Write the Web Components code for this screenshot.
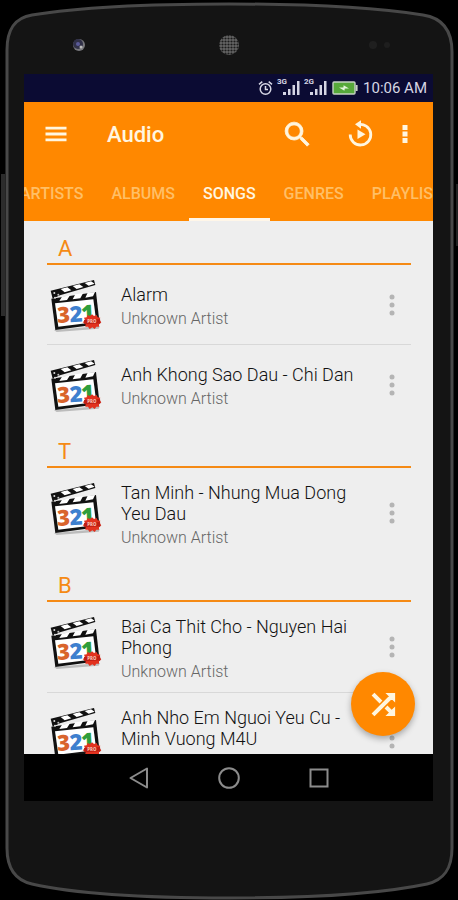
<!DOCTYPE html>
<html lang="en">
<head>
<meta charset="utf-8">
<meta name="viewport" content="width=device-width, initial-scale=1">
<title>Audio</title>
<style>
    body {
        margin: 0;
        background: #000;
        font-family: Roboto, 'Liberation Sans', sans-serif;
    }
</style>
</head>
<body>
<phone-frame>
    <status-bar time="10:06 AM"></status-bar>
    <app-bar>Audio</app-bar>
    <tab-bar tabs="ARTISTS,ALBUMS,SONGS,GENRES,PLAYLISTS" active="SONGS"></tab-bar>
    <song-list>
        <song-section letter="A">
            <song-item artist="Unknown Artist">Alarm</song-item>
            <song-item artist="Unknown Artist">Anh Khong Sao Dau - Chi Dan</song-item>
        </song-section>
        <song-section letter="T">
            <song-item artist="Unknown Artist">Tan Minh - Nhung Mua Dong Yeu Dau</song-item>
        </song-section>
        <song-section letter="B">
            <song-item artist="Unknown Artist">Bai Ca Thit Cho - Nguyen Hai Phong</song-item>
            <song-item artist="Unknown Artist">Anh Nho Em Nguoi Yeu Cu - Minh Vuong M4U</song-item>
        </song-section>
        <shuffle-button slot="action"></shuffle-button>
    </song-list>
    <nav-bar></nav-bar>
</phone-frame>

<script>
class PhoneFrame extends HTMLElement {
    constructor() {
        super();
        this.attachShadow({ mode: 'open' });
    }

    connectedCallback() {
        this.shadowRoot.innerHTML = `
            <style>
                :host {
                    display: flex;
                    flex-direction: column;
                    position: relative;
                    box-sizing: border-box;
                    height: 100vh;
                    padding: 0 25px 99px 24px;
                }
                .body {
                    position: absolute;
                    inset: 0;
                    width: 100%;
                    height: 100%;
                    z-index: -1;
                }
                .bezel {
                    flex: none;
                    display: grid;
                    grid-template-columns: 1fr auto 1fr;
                    align-items: center;
                    height: 74px;
                    padding: 0 40px;
                    box-sizing: border-box;
                }
                .bezel svg { display: block; margin-top: 16px; }
                .camera { margin-left: 8px; }
                .sensors { justify-self: end; }
                .screen {
                    flex: 1;
                    min-height: 0;
                    display: flex;
                    flex-direction: column;
                    overflow: hidden;
                }
            </style>
            <svg class="body" viewBox="0 0 458 900" preserveAspectRatio="none" aria-hidden="true">
                <path d="M3 174 V316" stroke="#2c2c2c" stroke-width="4"/>
                <path d="M457 184 V246" stroke="#222" stroke-width="2"/>
                <path d="M7 50 C7 30 14 18 32 15 C75 8 140 4 229 4 C318 4 378 8 423 15 C443 18 452 31 452 52
                         V848 C452 869 444 880 427 884 C380 894 318 898 229 898 C140 898 76 894 32 884
                         C14 880 7 866 7 848 Z" fill="#141414" stroke="#484848" stroke-width="3"/>
            </svg>
            <div class="bezel">
                <svg class="camera" width="14" height="14" viewBox="0 0 14 14" aria-hidden="true">
                    <circle cx="7" cy="7" r="6" fill="#77777b"/>
                    <circle cx="6" cy="6" r="5" fill="#303047"/>
                    <circle cx="6" cy="6" r="2" fill="#5a5a98"/>
                    <circle cx="9" cy="9" r="1.5" fill="#bbb"/>
                </svg>
                <svg width="22" height="22" viewBox="0 0 22 22" aria-hidden="true">
                    <defs>
                        <pattern id="mesh" width="3" height="3" patternUnits="userSpaceOnUse">
                            <rect width="3" height="3" fill="#666"/>
                            <circle cx="1.5" cy="1.5" r="1.1" fill="#1c1c1c"/>
                        </pattern>
                    </defs>
                    <circle cx="11" cy="11" r="10" fill="url(#mesh)"/>
                </svg>
                <svg class="sensors" width="24" height="10" viewBox="0 0 24 10" aria-hidden="true">
                    <circle cx="4" cy="5" r="4" fill="#1f1f1f"/>
                    <circle cx="18" cy="5" r="3" fill="#1e1e1e"/>
                </svg>
            </div>
            <div class="screen"><slot></slot></div>
        `;
    }
}

class StatusBar extends HTMLElement {
    constructor() {
        super();
        this.attachShadow({ mode: 'open' });
    }

    connectedCallback() {
        this.shadowRoot.innerHTML = `
            <style>
                :host {
                    flex: none;
                    display: flex;
                    justify-content: flex-end;
                    align-items: center;
                    gap: 5px;
                    height: 28px;
                    padding-right: 6px;
                    background: #0b0b33;
                    color: #d6d6e4;
                    font-size: 15px;
                }
                svg { display: block; }
                .signal { position: relative; padding-left: 5px; }
                .signal span {
                    position: absolute;
                    left: -1px;
                    top: -3px;
                    font-size: 8px;
                    line-height: 8px;
                    font-weight: 700;
                }
            </style>
            <svg width="15" height="16" viewBox="0 0 15 16" fill="none" stroke="#d6d6e4" stroke-width="1.5" aria-hidden="true">
                <circle cx="7.5" cy="9" r="5.3"/>
                <path d="M7.5 6 V9.4 H10 M1 4.4 L4.3 1.6 M14 4.4 L10.7 1.6"/>
            </svg>
            ${this.signal('3G')}
            ${this.signal('2G')}
            <svg width="26" height="14" viewBox="0 0 26 14" aria-hidden="true">
                <rect x="1" y="1" width="22" height="12" rx="1" fill="#56a83a" stroke="#c6d2c4" stroke-width="1.4"/>
                <path d="M24.6 4 V10" stroke="#c6d2c4" stroke-width="2"/>
                <path d="M7 6.4 L11.400 6.400 L11.6 4.200 L17 7.6 L12.8 7.6 L12.400 9.800 Z" fill="#e4f4dc"/>
            </svg>
            <time>${this.getAttribute('time')}</time>
        `;
    }

    signal(label) {
        return `
            <div class="signal">
                <span>${label}</span>
                <svg width="17" height="14" viewBox="0 0 17 14" fill="#d6d6e4" aria-hidden="true">
                    <path d="M0 11h3v3H0zM5 8h2.5v6H5zM9.5 4h2.5v10H9.5zM14 0h2.5v14H14z"/>
                </svg>
            </div>
        `;
    }
}

class AppBar extends HTMLElement {
    constructor() {
        super();
        this.attachShadow({ mode: 'open' });
    }

    connectedCallback() {
        this.shadowRoot.innerHTML = `
            <style>
                :host {
                    flex: none;
                    display: flex;
                    align-items: center;
                    height: 64px;
                    padding: 0 8px;
                    background: #ff8800;
                    color: #fff6e0;
                }
                h1 {
                    flex: 1;
                    margin: 0 0 0 27px;
                    font-size: 22px;
                    font-weight: 500;
                }
                button {
                    display: grid;
                    place-items: center;
                    width: 48px;
                    height: 48px;
                    padding: 0;
                    border: 0;
                    background: none;
                    color: inherit;
                }
                .search { margin-right: 16px; }
                .more { width: 40px; }
                svg { display: block; fill: currentColor; }
            </style>
            <button aria-label="Menu">
                <svg width="28" height="28" viewBox="0 0 24 24"><path d="M3 18.200h18v-2.400H3v2.400zm0-5h18v-2.400H3v2.400zm0-7.400v2.400h18V5.800H3z"/></svg>
            </button>
            <h1><slot></slot></h1>
            <button class="search" aria-label="Search">
                <svg width="33" height="33" viewBox="0 0 24 24" stroke="currentColor" stroke-width=".6"><path d="M15.5 14h-.79l-.28-.27A6.471 6.471 0 0 0 16 9.5 6.5 6.5 0 1 0 9.5 16c1.61 0 3.09-.59 4.23-1.57l.27.28v.79l5 4.99L20.49 19l-4.99-5zm-6 0C7.01 14 5 11.99 5 9.5S7.01 5 9.5 5 14 7.01 14 9.5 11.99 14 9.5 14z"/></svg>
            </button>
            <button aria-label="Resume playback">
                <svg width="32" height="32" viewBox="0 0 32 32">
                    <path d="M13 6.700 A10.3 10.3 0 1 1 5.200 16.500" fill="none" stroke="currentColor" stroke-width="2.800"/>
                    <path d="M16 2.200 V10.800 L10 6.200 Z"/>
                    <path d="M12.500 11.500 V21 L20.500 16.200 Z"/>
                </svg>
            </button>
            <button class="more" aria-label="More options">
                <svg width="6" height="20" viewBox="0 0 6 20"><path d="M.5 1h5v5h-5zM.5 7.5h5v5h-5zM.5 14h5v5h-5z"/></svg>
            </button>
        `;
    }
}

class TabBar extends HTMLElement {
    constructor() {
        super();
        this.attachShadow({ mode: 'open' });
    }

    connectedCallback() {
        const active = this.getAttribute('active');
        const tabs = this.getAttribute('tabs').split(',');

        this.shadowRoot.innerHTML = `
            <style>
                :host {
                    flex: none;
                    display: block;
                    height: 55px;
                    background: #ff8800;
                }
                [role=tablist] {
                    display: flex;
                    height: 100%;
                    overflow-x: auto;
                    scrollbar-width: none;
                }
                button {
                    flex: none;
                    padding: 3px 14px 0;
                    border: 0;
                    border-bottom: 3px solid transparent;
                    background: none;
                    color: #ffbf66;
                    font: 500 16px Roboto, 'Liberation Sans', sans-serif;
                }
                button[aria-selected=true] {
                    color: #fff6e0;
                    border-bottom-color: #fff6e8;
                }
            </style>
            <div role="tablist">
                ${tabs.map(tab => `<button role="tab" aria-selected="${tab === active}">${tab}</button>`).join('')}
            </div>
        `;

        // leave the first tab partly scrolled out
        this.shadowRoot.querySelector('[role=tablist]').scrollLeft = 18;
    }
}

class SongList extends HTMLElement {
    constructor() {
        super();
        this.attachShadow({ mode: 'open' });
    }

    connectedCallback() {
        this.shadowRoot.innerHTML = `
            <style>
                :host {
                    flex: 1;
                    min-height: 0;
                    display: block;
                    position: relative;
                    background: #eee;
                }
                .scroll {
                    height: 100%;
                    box-sizing: border-box;
                    padding: 0 22px 0 23px;
                    overflow-y: auto;
                    scrollbar-width: none;
                }
                .action {
                    position: absolute;
                    right: 18px;
                    bottom: 18px;
                }
            </style>
            <div class="scroll"><slot></slot></div>
            <div class="action"><slot name="action"></slot></div>
        `;
    }
}

class SongSection extends HTMLElement {
    constructor() {
        super();
        this.attachShadow({ mode: 'open' });
    }

    connectedCallback() {
        this.shadowRoot.innerHTML = `
            <style>
                :host { display: block; }
                h2 {
                    margin: 0;
                    padding: 16px 0 2px 11px;
                    border-bottom: 2px solid #f58a14;
                    color: #f58a14;
                    font-size: 22px;
                    line-height: 24px;
                    font-weight: 400;
                }
                ::slotted(song-item:not(:last-child)) {
                    border-bottom: 1px solid #d8d8d8;
                }
            </style>
            <h2>${this.getAttribute('letter')}</h2>
            <slot></slot>
        `;
    }
}

class SongItem extends HTMLElement {
    constructor() {
        super();
        this.attachShadow({ mode: 'open' });
    }

    connectedCallback() {
        this.shadowRoot.innerHTML = `
            <style>
                :host {
                    display: flex;
                    align-items: center;
                    min-height: 79px;
                }
                clapper-art {
                    align-self: flex-start;
                    margin: 15px 19px 0 3px;
                }
                .text {
                    flex: 1;
                    padding: 14px 0 8px;
                }
                .title {
                    margin: 0;
                    color: #111;
                    font-size: 18px;
                    line-height: 21px;
                    font-weight: 300;
                }
                .artist {
                    margin: 2px 0 0;
                    color: #666;
                    font-size: 16px;
                    line-height: 24px;
                    font-weight: 300;
                }
                button {
                    flex: none;
                    display: grid;
                    place-items: center;
                    width: 38px;
                    height: 48px;
                    padding: 0;
                    border: 0;
                    background: none;
                }
            </style>
            <clapper-art></clapper-art>
            <div class="text">
                <p class="title"><slot></slot></p>
                <p class="artist">${this.getAttribute('artist')}</p>
            </div>
            <button aria-label="Song options">
                <svg width="6" height="22" viewBox="0 0 6 22" fill="#b4b4b4">
                    <circle cx="3" cy="3" r="2.5"/><circle cx="3" cy="11" r="2.5"/><circle cx="3" cy="19" r="2.5"/>
                </svg>
            </button>
        `;
    }
}

class ClapperArt extends HTMLElement {
    constructor() {
        super();
        this.attachShadow({ mode: 'open' });
    }

    connectedCallback() {
        this.shadowRoot.innerHTML = `
            <style>
                :host { display: block; flex: none; }
                svg { display: block; }
                text { font-family: 'Open Sans', Roboto, sans-serif; font-weight: 800; }
            </style>
            <svg width="52" height="52" viewBox="0 0 156 156" aria-hidden="true">
                <path d="M12 150 L150 138 L146 146 L20 156 Z" fill="#bcbcbc"/>
                <!-- board -->
                <path d="M4 56 L138 36 L149 132 L16 150 Z" fill="#111"/>
                <path d="M15 70 L130 58 L139 126 L25 140 Z" fill="#fff"/>
                <path d="M36 50 L60 46 L51 60 L28 63 Z M76 43 L99 40 L91 55 L68 58 Z M113 38 L135 36 L129 49 L106 53 Z" fill="#fff"/>
                <!-- arm -->
                <path d="M2 32 L132 0 L136 15 L30 46 L8 56 Z" fill="#111"/>
                <path d="M32 27 L52 22 L64 31 L44 37 Z M68 18 L88 13 L100 21 L80 27 Z M104 9 L123 4 L134 11 L116 17 Z" fill="#fff"/>
                <circle cx="13" cy="39" r="3" fill="#ddd"/>
                <circle cx="25" cy="44" r="3" fill="#bbb"/>
                <circle cx="15" cy="53" r="3" fill="#ddd"/>
                <g font-size="66" transform="rotate(-3 78 100)">
                    <text x="21" y="126" fill="#d9642c">3</text>
                    <text x="59" y="126" fill="#3e80cf">2</text>
                    <text x="93" y="124" fill="#2f9e3b">1</text>
                </g>
                <!-- badge -->
                <path d="M126 103 L132 108 L140 105 L143 112 L151 113 L148 121 L154 127 L147 132 L147 140 L139 140 L134 147 L127 142 L119 147 L114 140 L106 140 L107 132 L98 127 L105 121 L102 113 L110 112 L113 105 L120 108 Z" fill="#e2321f"/>
                <path d="M102 120 L150 117 L152 130 L103 133 Z" fill="#bd1e14"/>
                <text x="112" y="130" font-size="13" fill="#f9b8a8">PRO</text>
            </svg>
        `;
    }
}

class ShuffleButton extends HTMLElement {
    constructor() {
        super();
        this.attachShadow({ mode: 'open' });
    }

    connectedCallback() {
        this.shadowRoot.innerHTML = `
            <style>
                :host { display: block; }
                button {
                    display: grid;
                    place-items: center;
                    width: 64px;
                    height: 64px;
                    padding: 0;
                    border: 0;
                    border-radius: 50%;
                    background: #ff8800;
                    box-shadow: 0 3px 6px rgba(0, 0, 0, 0.3);
                }
            </style>
            <button aria-label="Shuffle all">
                <svg width="33" height="33" viewBox="0 0 24 24" fill="#fff6e0"><path d="M10.59 9.17L5.41 4 4 5.41l5.17 5.17 1.42-1.41zM14.5 4l2.04 2.04L4 18.59 5.41 20 17.96 7.46 20 9.5V4h-5.5zm.33 9.41l-1.41 1.41 3.13 3.13L14.5 20H20v-5.5l-2.04 2.04-3.13-3.13z" stroke="#fff6e0" stroke-width=".9"/></svg>
            </button>
        `;
    }
}

class NavBar extends HTMLElement {
    constructor() {
        super();
        this.attachShadow({ mode: 'open' });
    }

    connectedCallback() {
        this.shadowRoot.innerHTML = `
            <style>
                :host {
                    flex: none;
                    display: flex;
                    justify-content: center;
                    align-items: center;
                    gap: 42px;
                    height: 47px;
                    background: #000;
                }
                button {
                    display: grid;
                    place-items: center;
                    width: 48px;
                    height: 40px;
                    padding: 0;
                    border: 0;
                    background: none;
                }
                svg { fill: none; stroke: #8c8c8c; stroke-width: 2; }
            </style>
            <button aria-label="Back">
                <svg width="24" height="24" viewBox="0 0 24 24"><path d="M20 2.5 V21.5 L3.5 12 Z" stroke-linejoin="round"/></svg>
            </button>
            <button aria-label="Home">
                <svg width="24" height="24" viewBox="0 0 24 24"><circle cx="12" cy="12" r="9.8"/></svg>
            </button>
            <button aria-label="Recent apps">
                <svg width="24" height="24" viewBox="0 0 24 24"><rect x="3.5" y="3.5" width="17" height="17"/></svg>
            </button>
        `;
    }
}

customElements.define('phone-frame', PhoneFrame);
customElements.define('status-bar', StatusBar);
customElements.define('app-bar', AppBar);
customElements.define('tab-bar', TabBar);
customElements.define('song-list', SongList);
customElements.define('song-section', SongSection);
customElements.define('song-item', SongItem);
customElements.define('clapper-art', ClapperArt);
customElements.define('shuffle-button', ShuffleButton);
customElements.define('nav-bar', NavBar);
</script>
</body>
</html>
